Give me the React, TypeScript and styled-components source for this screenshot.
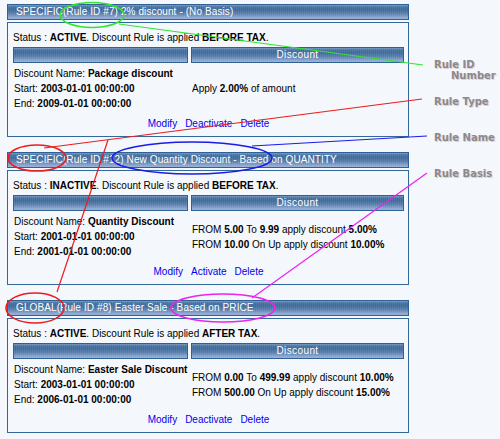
import styled, { createGlobalStyle } from "styled-components"

const GlobalStyle = createGlobalStyle`
  body {
    margin: 0;
    background: #f4f7fb;
  }
`

type Rule = {
  scope: string
  id: number
  name: string
  basis: string
  active: boolean
  tax: string
  discountName: string
  start: string
  end: string
  tiers: { from: string; to?: string; pct: string }[] | null
  flat?: string
}

const rules: Rule[] = [
  {
    scope: "SPECIFIC",
    id: 7,
    name: "2% discount",
    basis: "(No Basis)",
    active: true,
    tax: "BEFORE TAX",
    discountName: "Package discount",
    start: "2003-01-01 00:00:00",
    end: "2009-01-01 00:00:00",
    tiers: null,
    flat: "2.00%",
  },
  {
    scope: "SPECIFIC",
    id: 12,
    name: "New Quantity Discount",
    basis: "Based on QUANTITY",
    active: false,
    tax: "BEFORE TAX",
    discountName: "Quantity Discount",
    start: "2001-01-01 00:00:00",
    end: "2001-01-01 00:00:00",
    tiers: [
      { from: "5.00", to: "9.99", pct: "5.00%" },
      { from: "10.00", pct: "10.00%" },
    ],
  },
  {
    scope: "GLOBAL",
    id: 8,
    name: "Easter Sale",
    basis: "Based on PRICE",
    active: true,
    tax: "AFTER TAX",
    discountName: "Easter Sale Discount",
    start: "2003-01-01 00:00:00",
    end: "2006-01-01 00:00:00",
    tiers: [
      { from: "0.00", to: "499.99", pct: "10.00%" },
      { from: "500.00", pct: "15.00%" },
    ],
  },
]

const Page = styled.div`
  position: relative;
  width: 500px;
  height: 439px;
  overflow: hidden;
  font-family: "Liberation Sans", Arial, sans-serif;
  font-size: 10px;
  color: #000;
`

const RuleList = styled.div`
  display: flex;
  flex-direction: column;
  gap: 15px;
  width: 402px;
  padding: 4px 0 0 7px;
`

const RuleBlock = styled.section`
  display: flex;
  flex-direction: column;
  gap: 2px;
`

// blue bar with the old dithered look
const barStyle = `
  box-sizing: border-box;
  height: 16px;
  border: 1px solid #2f6196;
  background:
    repeating-linear-gradient(90deg, rgba(255,255,255,0.08) 0 1px, transparent 1px 2px),
    linear-gradient(to bottom, #7398c2 0%, #4470a1 14%, #3d699a 35%, #587fae 62%, #86a2cd 86%, #97b0d8 100%);
  color: #fff;
  line-height: 14px;
`

const TitleBar = styled.div`
  ${barStyle}
  padding-left: 8px;
  letter-spacing: 0.1px;
  white-space: nowrap;
`

const Box = styled.div`
  box-sizing: border-box;
  height: 115px;
  border: 1px solid #336699;
  padding: 7px 4px 5px 5px;
  display: flex;
  flex-direction: column;
`

const Status = styled.div`
  line-height: 15px;
  white-space: nowrap;
`

const Table = styled.div`
  display: grid;
  grid-template-columns: 175px 1fr;
  grid-template-rows: 16px 45px;
  column-gap: 3px;
  row-gap: 3px;
  margin-top: 2px;
`

const HeadCell = styled.div`
  ${barStyle}
  text-align: center;
  letter-spacing: 0.4px;
`

const Cell = styled.div<{ $middle?: boolean }>`
  align-self: ${(p) => (p.$middle ? "center" : "start")};
  padding-left: 1px;
  line-height: 15px;
  white-space: nowrap;
`

const Actions = styled.div`
  display: flex;
  justify-content: center;
  gap: 8px;
  margin-top: 5px;
  line-height: 15px;
`

const ActionLink = styled.a`
  color: #0000ee;
  text-decoration: none;
  cursor: pointer;
`

const Note = styled.div<{ $indent?: number }>`
  position: absolute;
  left: ${(p) => 434 + (p.$indent ?? 0)}px;
  font-family: "DejaVu Sans", Verdana, sans-serif;
  font-weight: bold;
  font-size: 10px;
  line-height: 11px;
  color: #8a8a8a;
  text-shadow: 1px 1px 0 #e3ccd6;
  white-space: nowrap;
`

const Overlay = styled.svg`
  position: absolute;
  left: 0;
  top: 0;
  pointer-events: none;
`

function RuleCard({ r }: { r: Rule }) {
  return (
    <RuleBlock>
      <TitleBar>
        {r.scope}(Rule ID #{r.id}) {r.name} - {r.basis}
      </TitleBar>
      <Box>
        <Status>
          Status : <b>{r.active ? "ACTIVE" : "INACTIVE"}</b>. Discount Rule is applied <b>{r.tax}</b>.
        </Status>
        <Table>
          <HeadCell />
          <HeadCell>Discount</HeadCell>
          <Cell>
            Discount Name: <b>{r.discountName}</b>
            <br />
            Start: <b>{r.start}</b>
            <br />
            End: <b>{r.end}</b>
          </Cell>
          <Cell $middle>
            {r.tiers ? (
              r.tiers.map((t) => (
                <div key={t.from}>
                  FROM <b>{t.from}</b>{" "}
                  {t.to ? (
                    <>
                      To <b>{t.to}</b>
                    </>
                  ) : (
                    "On Up"
                  )}{" "}
                  apply discount <b>{t.pct}</b>
                </div>
              ))
            ) : (
              <>
                Apply <b>{r.flat}</b> of amount
              </>
            )}
          </Cell>
        </Table>
        <Actions>
          <ActionLink>Modify</ActionLink>
          <ActionLink>{r.active ? "Deactivate" : "Activate"}</ActionLink>
          <ActionLink>Delete</ActionLink>
        </Actions>
      </Box>
    </RuleBlock>
  )
}

export default function App() {
  return (
    <Page>
      <GlobalStyle />
      <RuleList>
        {rules.map((r) => (
          <RuleCard key={r.id} r={r} />
        ))}
      </RuleList>

      <Overlay width="500" height="439" viewBox="0 0 500 439">
        <g fill="none" strokeWidth="1.6">
          <ellipse cx="92" cy="15" rx="32" ry="12.5" stroke="#2fe62f" />
          <line x1="119" y1="24" x2="423" y2="65" stroke="#2fe62f" strokeWidth="1.2" />

          <ellipse cx="37" cy="158" rx="29" ry="13" stroke="#ee1c1c" />
          <line x1="44" y1="148" x2="422" y2="99" stroke="#ee1c1c" strokeWidth="1.2" />
          <line x1="108" y1="140" x2="57" y2="292" stroke="#ee1c1c" strokeWidth="1.2" />
          <ellipse cx="35" cy="308" rx="29" ry="15" stroke="#ee1c1c" />

          <ellipse cx="192" cy="158" rx="80" ry="16" stroke="#1c1ce6" />
          <line x1="252" y1="146" x2="427" y2="136" stroke="#1c1ce6" strokeWidth="1.2" />

          <ellipse cx="223" cy="308" rx="52" ry="14" stroke="#ee22ee" />
          <line x1="427" y1="173" x2="252" y2="298" stroke="#ee22ee" strokeWidth="1.2" />
        </g>
      </Overlay>

      <Note style={{ top: 59 }}>Rule ID</Note>
      <Note $indent={17} style={{ top: 70 }}>
        Number
      </Note>
      <Note style={{ top: 96 }}>Rule Type</Note>
      <Note style={{ top: 132 }}>Rule Name</Note>
      <Note style={{ top: 168 }}>Rule Basis</Note>
    </Page>
  )
}
